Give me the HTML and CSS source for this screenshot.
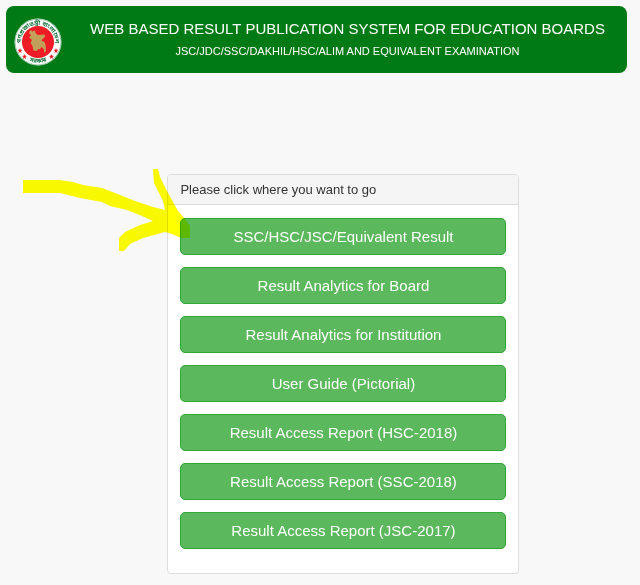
FILE: index.html
```html
<!DOCTYPE html>
<html lang="en">
<head>
    <meta charset="UTF-8">
    <meta name="viewport" content="width=device-width, initial-scale=1.0">
    <title>Web Based Result Publication System for Education Boards</title>
    <link rel="stylesheet" href="styles.css">
</head>
<body>
    <header class="banner">
        <svg class="logo" viewBox="0 0 96 96" aria-hidden="true">
            <defs>
                <path id="arc-top" d="M17 62 A34 34 0 1 1 79 62"/>
                <path id="arc-bottom" d="M18 77 A42 42 0 0 0 78 77"/>
            </defs>
            <circle cx="48" cy="48" r="47" fill="#fff"/>
            <circle cx="48" cy="48" r="46" fill="none" stroke="#2c8a52" stroke-width="1"/>
            <circle cx="48" cy="48" r="32" fill="#ee1c25"/>
            <path fill="#c2a05a" d="M33 24 L37 27 L42 25 L44 32 L49 34 L61 33 L62 38 L57 42 L55 46 L60 47 L63 53 L64 66 L61 70 L59 61 L54 58 L52 63 L48 62 L46 66 L39 65 L37 56 L33 50 L36 44 L30 39 L34 35 L30 30 Z"/>
            <text class="logo-text"><textPath href="#arc-top" startOffset="50%">গণপ্রজাতন্ত্রী বাংলাদেশ</textPath></text>
            <text class="logo-text"><textPath href="#arc-bottom" startOffset="50%">সরকার</textPath></text>
            <g fill="#ee1c25">
                <path id="star" d="M12 60 L13 63 L17 64 L14 66 L15 70 L12 68 L9 70 L10 66 L7 64 L11 63 Z"/>
                <use href="#star" x="9" y="12"/>
                <use href="#star" x="63" y="12"/>
                <use href="#star" x="72"/>
            </g>
        </svg>
        <div class="banner-text">
            <h1>WEB BASED RESULT PUBLICATION SYSTEM FOR EDUCATION BOARDS</h1>
            <p>JSC/JDC/SSC/DAKHIL/HSC/ALIM AND EQUIVALENT EXAMINATION</p>
        </div>
    </header>

    <main class="panel">
        <h2 class="panel-heading">Please click where you want to go</h2>
        <nav class="panel-body">
            <a class="btn" href="#result">SSC/HSC/JSC/Equivalent Result</a>
            <a class="btn" href="#board">Result Analytics for Board</a>
            <a class="btn" href="#institution">Result Analytics for Institution</a>
            <a class="btn" href="#guide">User Guide (Pictorial)</a>
            <a class="btn" href="#hsc-2018">Result Access Report (HSC-2018)</a>
            <a class="btn" href="#ssc-2018">Result Access Report (SSC-2018)</a>
            <a class="btn" href="#jsc-2017">Result Access Report (JSC-2017)</a>
        </nav>
        <!-- highlighter arrow to the first button -->
        <svg class="arrow" viewBox="22 168 170 84" aria-hidden="true">
            <path d="M23 180 H60 L73 182 L83 185 L102 188 L110 191 L120 195 L135 201 L153 207 L165 210 L163 201 L154 183 L153 169 H158 L160 177 L167 191 L178 211 L185 219 L190 226 V238 H181 L172 234 L165 232 L143 238 L130 244 L124 251 H119 V238 L125 232 L140 225 L153 221 L142 216 L127 210 L110 206 L102 202 L80 198 L60 193 L23 193 Z"/>
        </svg>
    </main>
</body>
</html>
```

FILE: styles.css
```css
* {
    box-sizing: border-box;
}

body {
    font-family: "Liberation Sans", Arial, sans-serif;
    background-color: #f8f8f8;
    color: #333333;
    margin: 0;
    padding: 6px 13px 10px 6px;
}

.banner {
    display: flex;
    align-items: center;
    padding: 12px 0 7px 8px;
    background-color: #007a14;
    color: #ffffff;
    border-radius: 8px;
}

.logo {
    flex: none;
    width: 48px;
    height: 48px;
}

.logo-text {
    font-family: "Noto Sans Bengali", "Noto Sans", sans-serif;
    font-size: 12px;
    font-weight: bold;
    text-anchor: middle;
    fill: #14733c;
}

.banner-text {
    flex: 1;
    padding: 0 0 4px 6px;
    text-align: center;
}

.banner h1 {
    margin: 0;
    font-size: 15px;
    font-weight: normal;
    line-height: 22px;
}

.banner p {
    margin: 0;
    font-size: 11px;
    line-height: 22px;
}

.panel {
    position: relative;
    width: 57%;
    max-width: 352px;
    margin: 101px 0 0 26%;
    background-color: #ffffff;
    border: 1px solid #dddddd;
    border-radius: 4px;
}

.panel-heading {
    margin: 0;
    padding: 5px 12px;
    font-size: 13px;
    font-weight: normal;
    line-height: 19px;
    background-color: #f5f5f5;
    border-bottom: 1px solid #dddddd;
    border-radius: 3px 3px 0 0;
}

.panel-body {
    display: flex;
    flex-direction: column;
    gap: 12px;
    padding: 13px 12px 24px;
}

.btn {
    padding: 8px;
    font-size: 15px;
    line-height: 19px;
    text-align: center;
    text-decoration: none;
    color: #ffffff;
    background-color: #5cb85c;
    border: 1px solid #2fa836;
    border-radius: 5px;
}

.btn:hover {
    background-color: #449d44;
}

.arrow {
    position: absolute;
    top: -7px;
    left: -146px;
    width: 170px;
    height: 84px;
    fill: #ffff00;
    mix-blend-mode: multiply;
    pointer-events: none;
}
```
